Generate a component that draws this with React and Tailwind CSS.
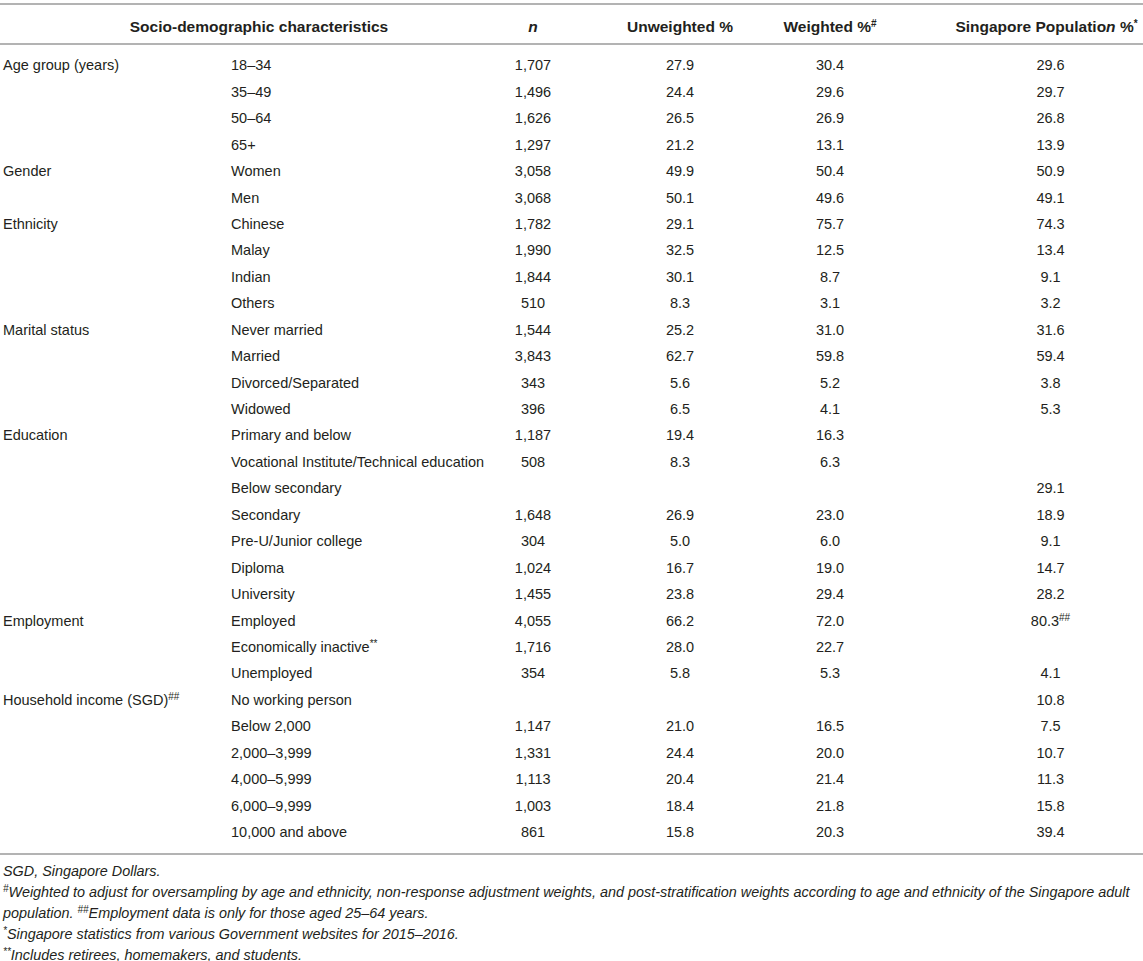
import React from "react";

const rows = [
  ["Age group (years)", "18–34", "1,707", "27.9", "30.4", "29.6"],
  ["", "35–49", "1,496", "24.4", "29.6", "29.7"],
  ["", "50–64", "1,626", "26.5", "26.9", "26.8"],
  ["", "65+", "1,297", "21.2", "13.1", "13.9"],
  ["Gender", "Women", "3,058", "49.9", "50.4", "50.9"],
  ["", "Men", "3,068", "50.1", "49.6", "49.1"],
  ["Ethnicity", "Chinese", "1,782", "29.1", "75.7", "74.3"],
  ["", "Malay", "1,990", "32.5", "12.5", "13.4"],
  ["", "Indian", "1,844", "30.1", "8.7", "9.1"],
  ["", "Others", "510", "8.3", "3.1", "3.2"],
  ["Marital status", "Never married", "1,544", "25.2", "31.0", "31.6"],
  ["", "Married", "3,843", "62.7", "59.8", "59.4"],
  ["", "Divorced/Separated", "343", "5.6", "5.2", "3.8"],
  ["", "Widowed", "396", "6.5", "4.1", "5.3"],
  ["Education", "Primary and below", "1,187", "19.4", "16.3", ""],
  ["", "Vocational Institute/Technical education", "508", "8.3", "6.3", ""],
  ["", "Below secondary", "", "", "", "29.1"],
  ["", "Secondary", "1,648", "26.9", "23.0", "18.9"],
  ["", "Pre-U/Junior college", "304", "5.0", "6.0", "9.1"],
  ["", "Diploma", "1,024", "16.7", "19.0", "14.7"],
  ["", "University", "1,455", "23.8", "29.4", "28.2"],
  ["Employment", "Employed", "4,055", "66.2", "72.0", "80.3##"],
  ["", "Economically inactive**", "1,716", "28.0", "22.7", ""],
  ["", "Unemployed", "354", "5.8", "5.3", "4.1"],
  ["Household income (SGD)##", "No working person", "", "", "", "10.8"],
  ["", "Below 2,000", "1,147", "21.0", "16.5", "7.5"],
  ["", "2,000–3,999", "1,331", "24.4", "20.0", "10.7"],
  ["", "4,000–5,999", "1,113", "20.4", "21.4", "11.3"],
  ["", "6,000–9,999", "1,003", "18.4", "21.8", "15.8"],
  ["", "10,000 and above", "861", "15.8", "20.3", "39.4"],
];

function Sup({ children }) {
  return (
    <span className="relative top-[-5px] text-[10px] leading-none">{children}</span>
  );
}

function renderText(t) {
  if (t.endsWith("##")) return <>{t.slice(0, -2)}<Sup>##</Sup></>;
  if (t.endsWith("**")) return <>{t.slice(0, -2)}<Sup>**</Sup></>;
  return t;
}

const grid = "grid grid-cols-[228px_250px_110px_184px_116px_1fr]";

export default function App() {
  return (
    <div
      className="w-[1143px] h-[961px] bg-white text-[#231f20] overflow-hidden"
      style={{ fontFamily: '"Liberation Sans", Arial, sans-serif' }}
    >
      <div className="pt-[3px]">
        <div className={`${grid} border-t-2 border-b-2 border-[#b3b3b3] h-[42px] pt-[6px] items-center text-[15.5px] font-bold whitespace-nowrap`}>
          <div className="col-span-2 pl-[40px] text-center">Socio-demographic characteristics</div>
          <div className="text-center italic">n</div>
          <div className="text-center">Unweighted %</div>
          <div className="text-center">Weighted %<Sup>#</Sup></div>
          <div className="pl-[62px] text-center">
            Singapore Populatio<span className="italic">n</span> %<Sup>*</Sup>
          </div>
        </div>
        <div className="pt-[8px] pb-[7px] border-b-2 border-[#b3b3b3] text-[14.5px]">
          {rows.map((r, i) => (
            <div key={i} className={`${grid} h-[26.45px] items-center`}>
              <div className="pl-[3px] whitespace-nowrap">{renderText(r[0])}</div>
              <div className="pl-[3px] whitespace-nowrap">{renderText(r[1])}</div>
              <div className="text-center">{r[2]}</div>
              <div className="text-center">{r[3]}</div>
              <div className="text-center">{r[4]}</div>
              <div className="pl-[70px] text-center">{renderText(r[5])}</div>
            </div>
          ))}
        </div>
        <div className="pt-[6px] pl-[3px] italic text-[14.4px] leading-[21px]">
          <p>SGD, Singapore Dollars.</p>
          <p>
            <Sup>#</Sup>Weighted to adjust for oversampling by age and ethnicity, non-response adjustment weights, and post-stratification weights according to age and ethnicity of the Singapore adult population. <Sup>##</Sup>Employment data is only for those aged 25–64 years.
          </p>
          <p><Sup>*</Sup>Singapore statistics from various Government websites for 2015–2016.</p>
          <p><Sup>**</Sup>Includes retirees, homemakers, and students.</p>
        </div>
      </div>
    </div>
  );
}
